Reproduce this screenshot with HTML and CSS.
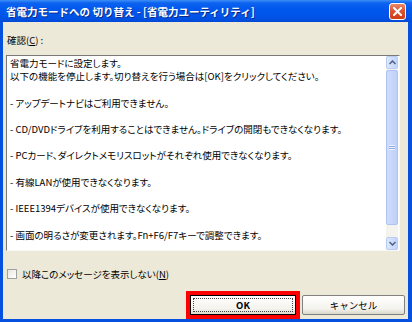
FILE: index.html
```html
<!DOCTYPE html>
<html lang="ja">
<head>
    <meta charset="UTF-8">
    <title>省電力モードへの 切り替え</title>
    <link rel="stylesheet" href="styles.css">
</head>
<body>
    <div class="window">
        <div class="titlebar">
            <span class="title">省電力モードへの 切り替え - [省電力ユーティリティ]</span>
            <span class="close">
                <svg width="9" height="9" viewBox="0 0 9 9">
                    <path d="M1 1 L8 8 M8 1 L1 8" stroke="#fff" stroke-width="2" stroke-linecap="square"/>
                </svg>
            </span>
        </div>
        <div class="client">
            <div class="label">確認(<u>C</u>) :</div>
            <div class="textbox">
                <div class="text">
                    <p>省電力モードに設定します。<br>以下の機能を停止します。切り替えを行う場合は[OK]をクリックしてください。</p>
                    <p>- アップデートナビはご利用できません。</p>
                    <p>- CD/DVDドライブを利用することはできません。ドライブの開閉もできなくなります。</p>
                    <p>- PCカード、ダイレクトメモリスロットがそれぞれ使用できなくなります。</p>
                    <p>- 有線LANが使用できなくなります。</p>
                    <p>- IEEE1394デバイスが使用できなくなります。</p>
                    <p>- 画面の明るさが変更されます。Fn+F6/F7キーで調整できます。</p>
                </div>
                <div class="scrollbar">
                    <div class="sb-btn">
                        <svg width="7" height="5" viewBox="0 0 7 5"><path d="M0.5 4 L3.5 1 L6.5 4" fill="none" stroke="#4d6185" stroke-width="1.5"/></svg>
                    </div>
                    <div class="sb-thumb">
                        <span class="grip"></span>
                    </div>
                    <div class="sb-track"></div>
                    <div class="sb-btn">
                        <svg width="7" height="5" viewBox="0 0 7 5"><path d="M0.5 1 L3.5 4 L6.5 1" fill="none" stroke="#4d6185" stroke-width="1.5"/></svg>
                    </div>
                </div>
            </div>
            <div class="check">
                <span class="box"></span>
                <span>以降このメッセージを表示しない(<u>N</u>)</span>
            </div>
            <div class="buttons">
                <div class="highlight">
                    <button class="btn default"><span class="focus">OK</span></button>
                </div>
                <button class="btn">キャンセル</button>
            </div>
        </div>
    </div>
</body>
</html>
```

FILE: styles.css
```css
body {
    margin: 0;
    width: 412px;
    height: 322px;
    overflow: hidden;
    font-family: "Noto Sans CJK JP", "Liberation Sans", sans-serif;
    font-feature-settings: "palt";
    font-size: 9.5px;
    color: #000;
}
.window {
    width: 412px;
    height: 322px;
    display: flex;
    flex-direction: column;
    background-color: #0650e0;
}
.titlebar {
    height: 23px;
    display: flex;
    align-items: center;
    justify-content: space-between;
    padding: 0 6px 0 6px;
    box-sizing: border-box;
    background: linear-gradient(to bottom, #3d8ff8 0px, #0d62ee 3px, #0058ee 9px, #0054e8 16px, #004ddc 21px, #0042c8 23px);
}
.title {
    color: #fff;
    font-size: 10.5px;
    font-weight: bold;
    font-feature-settings: normal;
    text-shadow: 1px 1px 0 #0a2a8a;
    white-space: nowrap;
}
.close {
    width: 15px;
    height: 15px;
    border: 1px solid #fff;
    border-radius: 3px;
    display: flex;
    align-items: center;
    justify-content: center;
    background: linear-gradient(to bottom, #e98a6c 0%, #dc5530 45%, #cf3d16 100%);
}
.client {
    flex: 1;
    margin: 0 4px 3px 3px;
    background-color: #ece9d8;
    padding-top: 12px;
    display: flex;
    flex-direction: column;
}
.label {
    margin-left: 4px;
    height: 13px;
    line-height: 13px;
}
.textbox {
    margin: 8px 0 0 3px;
    width: 394px;
    height: 196px;
    box-sizing: border-box;
    border: 1px solid;
    border-color: #7a7a7a #f8f8f8 #f8f8f8 #7a7a7a;
    background-color: #fff;
    display: flex;
}
.text {
    flex: 1;
    padding: 1px 0 0 3px;
    line-height: 13.2px;
    white-space: nowrap;
}
.text p {
    margin: 0 0 13.2px 0;
}
.scrollbar {
    width: 12px;
    margin-right: 1px;
    display: flex;
    flex-direction: column;
    background-color: #f4f3ee;
}
.sb-btn {
    height: 13px;
    box-sizing: border-box;
    border: 1px solid #b8cbf3;
    border-radius: 2px;
    background: linear-gradient(to right, #dde7fd, #c3d4fb);
    display: flex;
    align-items: center;
    justify-content: center;
}
.sb-thumb {
    height: 155px;
    margin-top: 1px;
    box-sizing: border-box;
    border: 1px solid #aec3f2;
    border-radius: 2px;
    background: linear-gradient(to right, #cfdcfc, #bed0fa);
    display: flex;
    align-items: center;
    justify-content: center;
}
.grip {
    width: 6px;
    height: 5px;
    background: repeating-linear-gradient(to bottom, #eef3fe 0px, #eef3fe 1px, #8fa9e6 1px, #8fa9e6 2px);
}
.sb-track {
    flex: 1;
}
.check {
    margin: 17px 0 0 4px;
    height: 12px;
    display: flex;
    align-items: center;
    gap: 5px;
}
.box {
    width: 10px;
    height: 10px;
    box-sizing: border-box;
    border: 1px solid #a0a0a0;
    background: linear-gradient(135deg, #e8e6e0, #ffffff);
}
.buttons {
    margin-top: 11px;
    margin-right: 3px;
    display: flex;
    justify-content: flex-end;
    align-items: center;
    gap: 2px;
}
.highlight {
    border: 4px solid #ff0000;
    display: flex;
}
.btn {
    width: 103px;
    height: 20px;
    padding: 0;
    font-family: inherit;
    font-size: 9.5px;
    border: 1px solid #808080;
    border-radius: 2px;
    background: linear-gradient(to bottom, #ffffff 0%, #f4f3ee 70%, #dcd8cc 100%);
    display: flex;
    align-items: center;
    justify-content: center;
}
.btn.default {
    width: 106px;
    border: 1px solid #000;
    border-radius: 0;
    padding: 2px;
}
.focus {
    flex: 1;
    align-self: stretch;
    display: flex;
    align-items: center;
    justify-content: center;
    border: 1px dotted #444;
    font-weight: bold;
}
```
